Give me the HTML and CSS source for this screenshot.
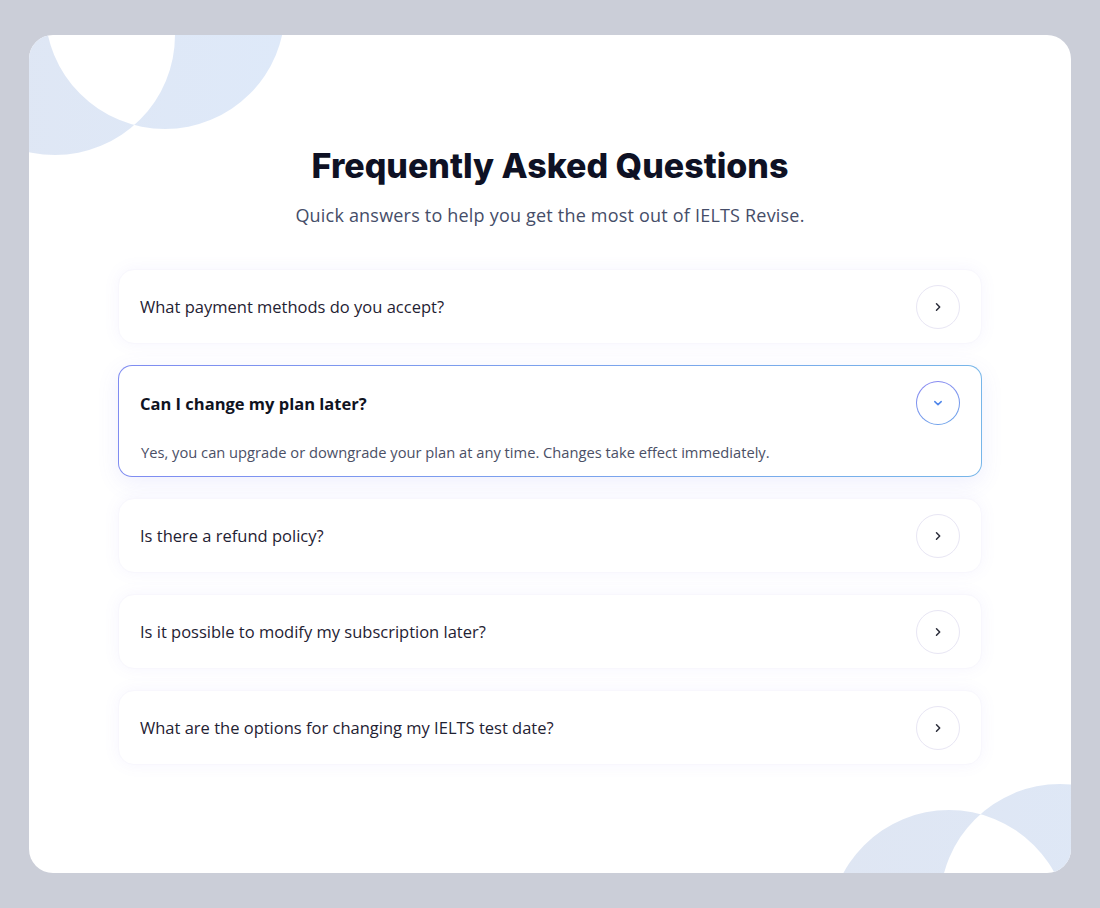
FILE: index.html
```html
<!DOCTYPE html>
<html lang="en">
<head>
<meta charset="utf-8">
<title>FAQ</title>
<link rel="stylesheet" href="styles.css">
</head>
<body>
<main class="card">
  <svg class="deco deco-tl" width="300" height="160" viewBox="0 0 300 160" aria-hidden="true">
    <defs>
      <linearGradient id="g1" x1="0" y1="0" x2="1" y2="0">
        <stop offset="0" stop-color="#dfe6f3"/>
        <stop offset="1" stop-color="#dee9f9"/>
      </linearGradient>
    </defs>
    <path fill="url(#g1)" fill-rule="evenodd" d="M-94 0a120 120 0 1 0 240 0a120 120 0 1 0 -240 0Z M16 -26a120 120 0 1 0 240 0a120 120 0 1 0 -240 0Z"/>
  </svg>
  <svg class="deco deco-br" width="260" height="100" viewBox="0 0 260 100" aria-hidden="true">
    <defs>
      <linearGradient id="g2" x1="0" y1="0" x2="1" y2="0">
        <stop offset="0" stop-color="#dfe6f3"/>
        <stop offset="1" stop-color="#dee8f7"/>
      </linearGradient>
    </defs>
    <path fill="url(#g2)" fill-rule="evenodd" d="M18 157a120 120 0 1 0 240 0a120 120 0 1 0 -240 0Z M129 131a120 120 0 1 0 240 0a120 120 0 1 0 -240 0Z"/>
  </svg>

  <header class="intro">
    <h1 class="title">Frequently Asked Questions</h1>
    <p class="subtitle">Quick answers to help you get the most out of IELTS Revise.</p>
  </header>

  <section class="faq">
    <div class="item">
      <div class="row">
        <span class="q">What payment methods do you accept?</span>
        <span class="btn"><svg width="10" height="10" viewBox="0 0 10 10"><path d="M3.5 1.8L6.7 5L3.5 8.2" fill="none" stroke="#2b2d3a" stroke-width="1.5" stroke-linecap="round" stroke-linejoin="round"/></svg></span>
      </div>
    </div>
    <div class="item open">
      <div class="row">
        <span class="q">Can I change my plan later?</span>
        <span class="btn"><svg width="10" height="10" viewBox="0 0 10 10"><path d="M1.8 3.6L5 6.6L8.2 3.6" fill="none" stroke="#4f86ea" stroke-width="1.5" stroke-linecap="round" stroke-linejoin="round"/></svg></span>
      </div>
      <p class="a">Yes, you can upgrade or downgrade your plan at any time. Changes take effect immediately.</p>
    </div>
    <div class="item">
      <div class="row">
        <span class="q">Is there a refund policy?</span>
        <span class="btn"><svg width="10" height="10" viewBox="0 0 10 10"><path d="M3.5 1.8L6.7 5L3.5 8.2" fill="none" stroke="#2b2d3a" stroke-width="1.5" stroke-linecap="round" stroke-linejoin="round"/></svg></span>
      </div>
    </div>
    <div class="item">
      <div class="row">
        <span class="q">Is it possible to modify my subscription later?</span>
        <span class="btn"><svg width="10" height="10" viewBox="0 0 10 10"><path d="M3.5 1.8L6.7 5L3.5 8.2" fill="none" stroke="#2b2d3a" stroke-width="1.5" stroke-linecap="round" stroke-linejoin="round"/></svg></span>
      </div>
    </div>
    <div class="item">
      <div class="row">
        <span class="q">What are the options for changing my IELTS test date?</span>
        <span class="btn"><svg width="10" height="10" viewBox="0 0 10 10"><path d="M3.5 1.8L6.7 5L3.5 8.2" fill="none" stroke="#2b2d3a" stroke-width="1.5" stroke-linecap="round" stroke-linejoin="round"/></svg></span>
      </div>
    </div>
  </section>
</main>
</body>
</html>
```
FILE: styles.css
```css
html, body {
  margin: 0;
  padding: 0;
}
body {
  background: #cbced8;
  padding: 35px 29px;
  font-family: "Open Sans", "Noto Sans", sans-serif;
  color: #1d2030;
}
.card {
  position: relative;
  overflow: hidden;
  box-sizing: border-box;
  width: 1042px;
  height: 838px;
  background: #ffffff;
  border-radius: 24px;
  padding: 111px 89px 0;
}
.deco {
  position: absolute;
  display: block;
}
.deco-tl {
  left: 0;
  top: 0;
}
.deco-br {
  right: 0;
  bottom: 0;
}
.intro {
  position: relative;
  text-align: center;
}
.title {
  margin: 0;
  font-family: "Inter", "Noto Sans", sans-serif;
  font-weight: 800;
  font-size: 34px;
  line-height: 40px;
  color: #0e1124;
  letter-spacing: 0;
}
.subtitle {
  margin: 16px 0 0;
  font-size: 18px;
  line-height: 26px;
  letter-spacing: 0.2px;
  color: #454d68;
}
.faq {
  position: relative;
  margin-top: 41px;
  display: flex;
  flex-direction: column;
  gap: 21px;
}
.item {
  box-sizing: border-box;
  background: #ffffff;
  border: 1px solid #f8f7fd;
  border-radius: 16px;
  box-shadow: 0 0 16px rgba(130, 110, 235, 0.07);
}
.row {
  box-sizing: border-box;
  height: 73px;
  display: flex;
  align-items: center;
  justify-content: space-between;
  padding: 0 21px 0 21px;
}
.q {
  font-size: 16.5px;
  color: #1f2233;
}
.btn {
  box-sizing: border-box;
  width: 44px;
  height: 44px;
  border-radius: 50%;
  border: 1px solid #e8e6f4;
  display: flex;
  align-items: center;
  justify-content: center;
  background: #fff;
}
.btn svg {
  display: block;
}
.item.open {
  border: 1px solid transparent;
  border-radius: 14px;
  background:
    linear-gradient(#fff, #fff) padding-box,
    linear-gradient(90deg, #7f8cf1, #77b6e9) border-box;
  box-shadow: 0 6px 22px rgba(100, 100, 240, 0.10);
}
.item.open .row {
  height: 74px;
}
.item.open .q {
  font-weight: 700;
  color: #10131f;
}
.item.open .btn {
  border: 1px solid transparent;
  background:
    linear-gradient(#fff, #fff) padding-box,
    linear-gradient(160deg, #8b86f2, #6aa6ea) border-box;
}
.a {
  margin: 0;
  padding: 2px 22px 14px;
  font-size: 14.7px;
  line-height: 20px;
  color: #4b5066;
}
```
